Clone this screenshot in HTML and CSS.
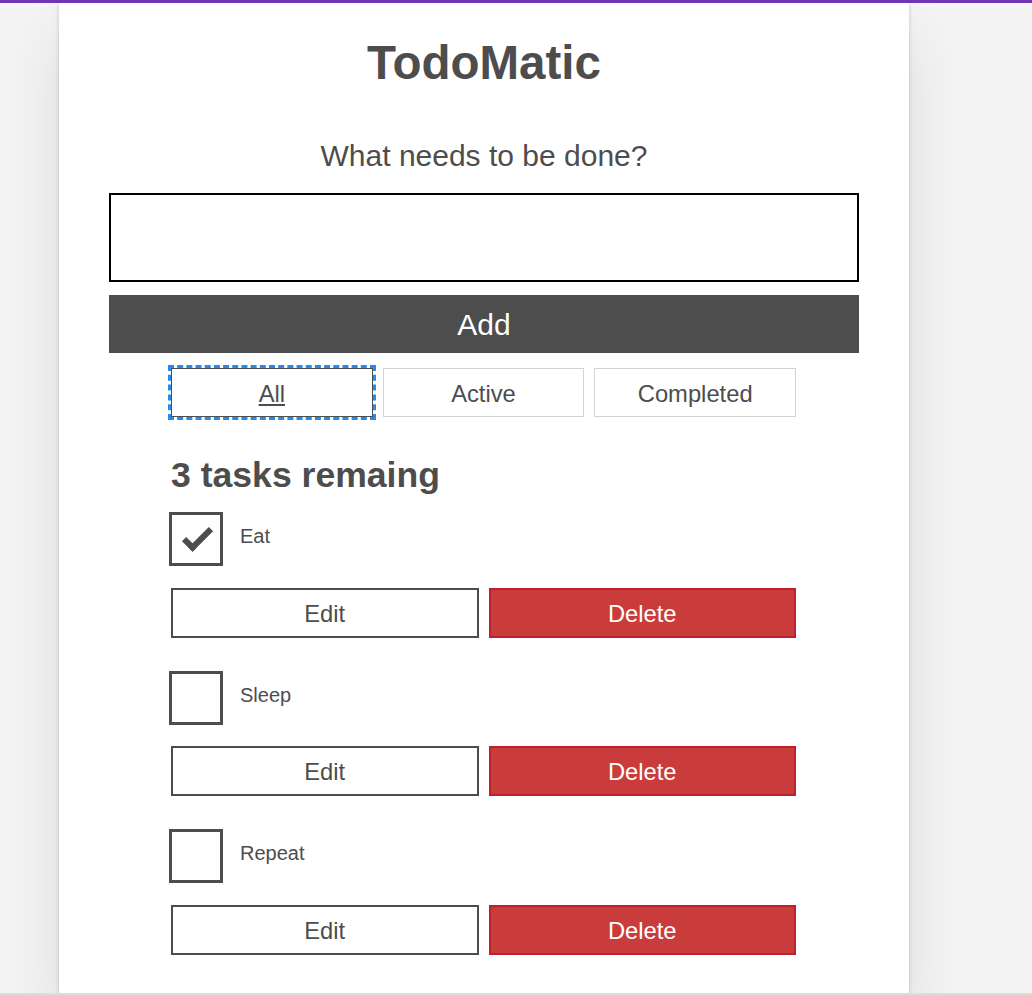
FILE: index.html
```html
<!DOCTYPE html>
<html lang="en">
<head>
<meta charset="utf-8">
<title>TodoMatic</title>
<link rel="stylesheet" href="styles.css">
</head>
<body>
<div class="topbar"></div>
<main class="todoapp">
  <h1 class="title">TodoMatic</h1>
  <form class="new-todo">
    <label class="prompt" for="new-todo-input">What needs to be done?</label>
    <input class="todo-input" id="new-todo-input" type="text" autocomplete="off">
    <button class="btn btn-add" type="button">Add</button>
  </form>
  <div class="filters">
    <button class="btn toggle-btn is-pressed" type="button">All</button>
    <button class="btn toggle-btn" type="button">Active</button>
    <button class="btn toggle-btn" type="button">Completed</button>
  </div>
  <h2 class="list-heading">3 tasks remaing</h2>
  <ul class="todo-list">
    <li class="todo">
      <div class="todo-row"><span class="checkbox checked"></span><span class="todo-label">Eat</span></div>
      <div class="btn-group"><button class="btn btn-edit" type="button">Edit</button><button class="btn btn-danger" type="button">Delete</button></div>
    </li>
    <li class="todo">
      <div class="todo-row"><span class="checkbox"></span><span class="todo-label">Sleep</span></div>
      <div class="btn-group"><button class="btn btn-edit" type="button">Edit</button><button class="btn btn-danger" type="button">Delete</button></div>
    </li>
    <li class="todo">
      <div class="todo-row"><span class="checkbox"></span><span class="todo-label">Repeat</span></div>
      <div class="btn-group"><button class="btn btn-edit" type="button">Edit</button><button class="btn btn-danger" type="button">Delete</button></div>
    </li>
  </ul>
</main>
<div class="bottom-line"></div>
</body>
</html>
```
FILE: styles.css
```css
html, body {
  margin: 0;
  padding: 0;
}
body {
  height: 995px;
  overflow: hidden;
  background: #f4f4f4;
  color: #4d4d4d;
  font-family: "Liberation Sans", Arial, sans-serif;
}
.topbar {
  position: relative;
  z-index: 2;
  height: 3px;
  background: #7036b3;
}
.todoapp {
  box-sizing: border-box;
  width: 850px;
  height: 990px;
  margin-left: 59px;
  padding: 29px 50px 0;
  background: #fff;
  box-shadow: 0 2px 4px 0 rgba(0, 0, 0, 0.2), 0 31px 62px 0 rgba(0, 0, 0, 0.1);
}
.title {
  margin: 0;
  font-size: 47.5px;
  line-height: 62px;
  font-weight: 700;
  text-align: center;
}
.new-todo {
  display: flex;
  flex-direction: column;
}
.prompt {
  display: block;
  margin-top: 45px;
  font-size: 30px;
  line-height: 34px;
  text-align: center;
}
.todo-input {
  box-sizing: border-box;
  height: 89px;
  margin: 20px 0 0;
  padding: 0 25px;
  border: 2px solid #000;
  border-radius: 0;
  font: 30px "Liberation Sans", Arial, sans-serif;
  color: #4d4d4d;
  outline: none;
}
.btn {
  box-sizing: border-box;
  margin: 0;
  padding: 0;
  font-family: "Liberation Sans", Arial, sans-serif;
  color: #4d4d4d;
  background: #fff;
  cursor: pointer;
  display: flex;
  align-items: center;
  justify-content: center;
}
.btn-add {
  height: 58px;
  margin-top: 13px;
  padding-top: 2px;
  border: none;
  background: #4d4d4d;
  color: #fff;
  font-size: 30px;
}
.filters {
  display: flex;
  gap: 10px;
  width: 625px;
  margin: 15px 0 0 62px;
}
.toggle-btn {
  flex: 1 1 0;
  height: 49px;
  padding-top: 2px;
  border: 1px solid #d3d3d3;
  font-size: 23.75px;
}
.toggle-btn.is-pressed {
  border-color: #4d4d4d;
  text-decoration: underline;
  outline: 3px dashed #228bec;
  outline-offset: 0;
}
.list-heading {
  margin: 35px 0 0 62px;
  font-size: 35.6px;
  line-height: 47px;
  font-weight: 700;
}
.todo-list {
  list-style: none;
  width: 625px;
  margin: 13px 0 0 62px;
  padding: 0;
}
.todo + .todo {
  margin-top: 33px;
}
.todo-row {
  display: flex;
  margin-left: -2px;
}
.checkbox {
  position: relative;
  flex: none;
  box-sizing: border-box;
  width: 54px;
  height: 54px;
  border: 3px solid #4d4d4d;
}
.checkbox.checked::after {
  content: "";
  position: absolute;
  top: 13.5px;
  left: 10.6px;
  width: 22.5px;
  height: 8.75px;
  border: solid #4d4d4d;
  border-width: 0 0 6.25px 6.25px;
  transform: rotate(-45deg);
}
.todo-label {
  margin-left: 17px;
  padding-top: 12px;
  font-size: 20px;
  line-height: 25px;
}
.btn-group {
  display: flex;
  gap: 10px;
  margin-top: 21.5px;
}
.btn-group .btn {
  flex: 1 1 0;
  height: 50px;
  padding-top: 2px;
  border: 2px solid #4d4d4d;
  font-size: 23.75px;
}
.btn-group .btn-danger {
  background: #ca3c3c;
  border-color: #bd2130;
  color: #fff;
}
.bottom-line {
  position: relative;
  height: 2px;
  background: #dcdcdc;
}
```
